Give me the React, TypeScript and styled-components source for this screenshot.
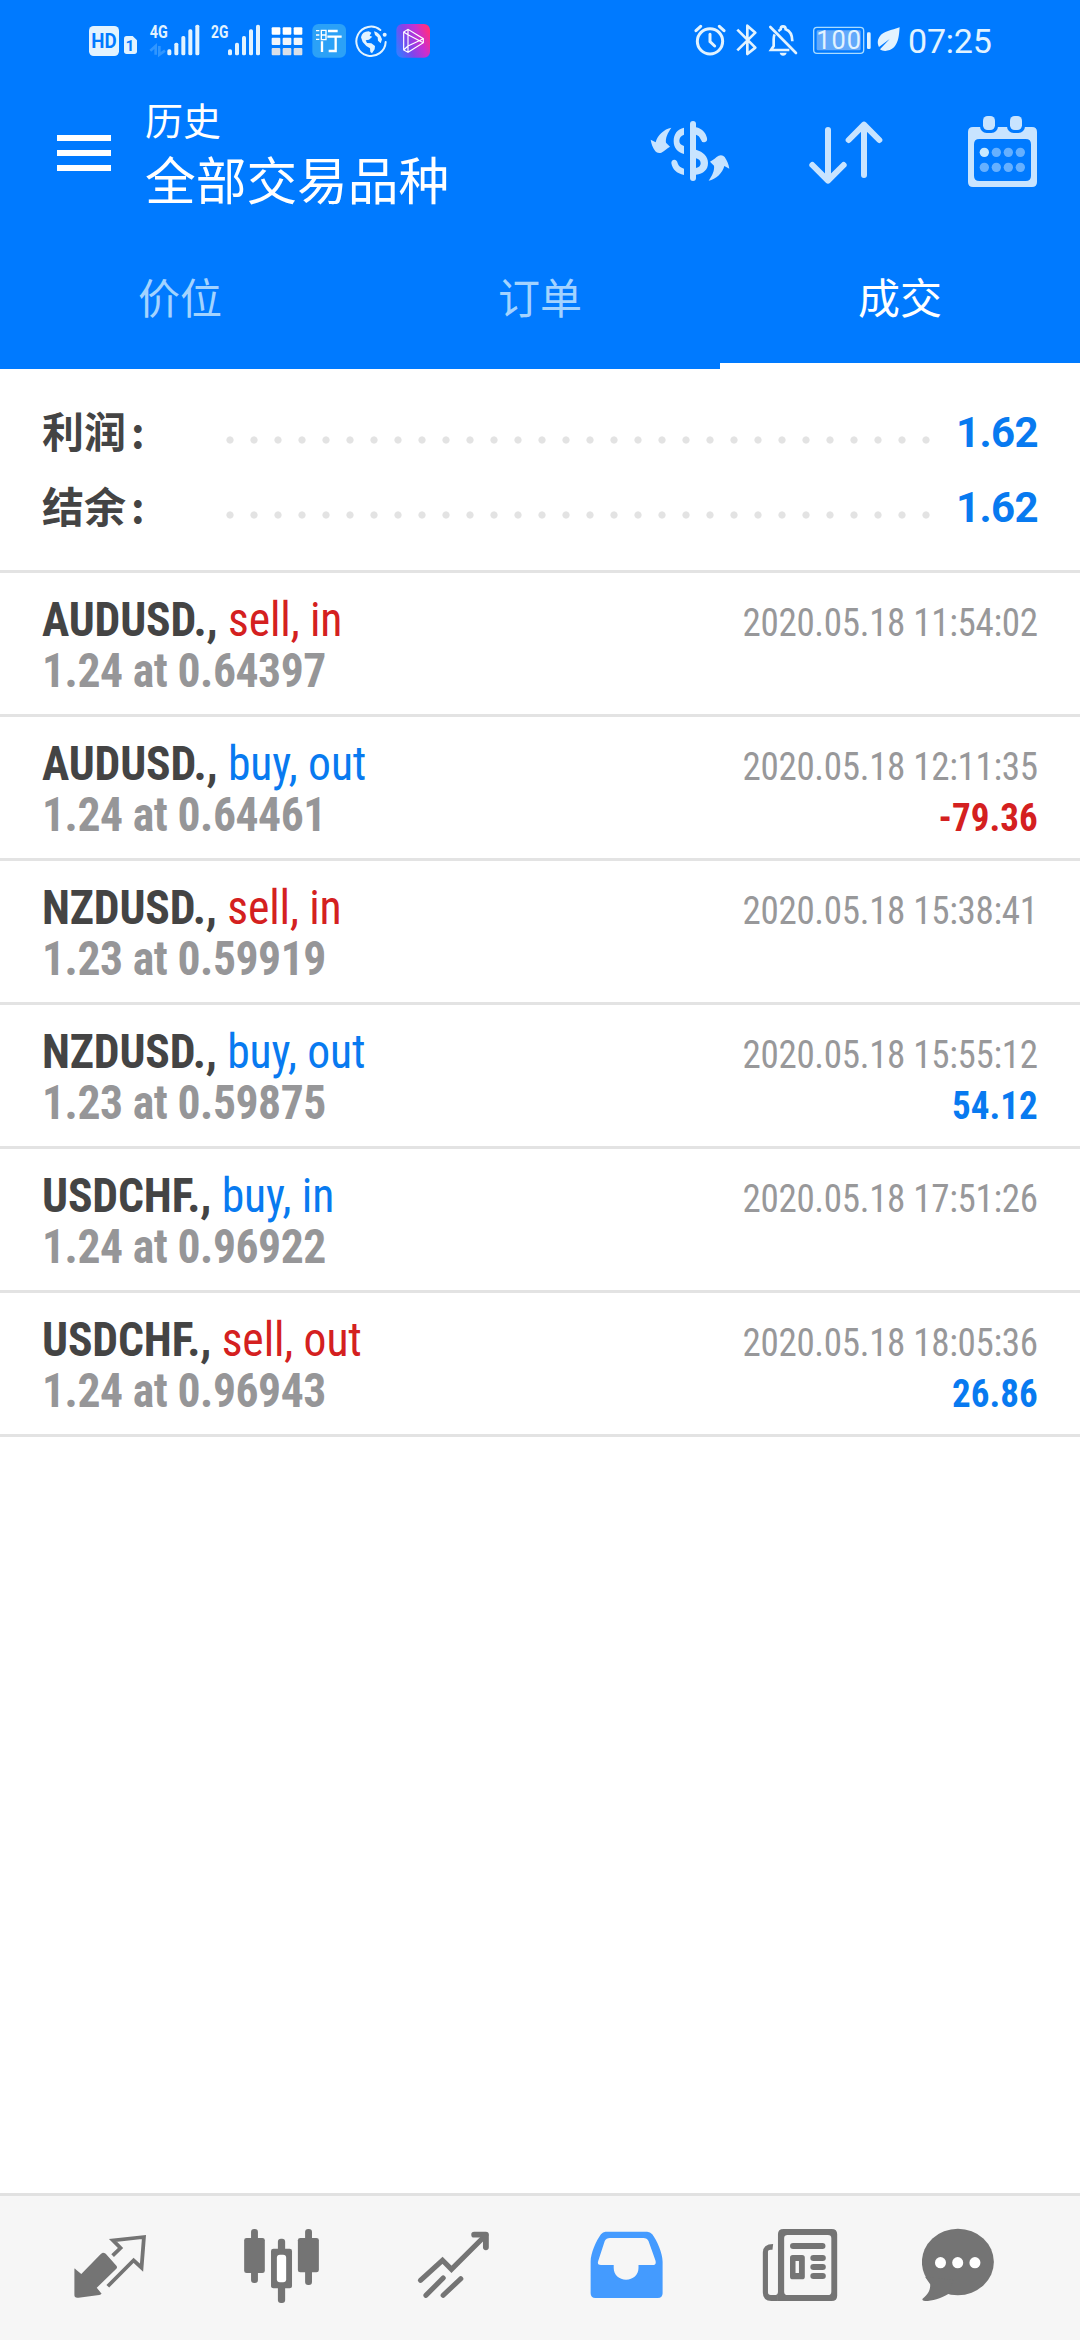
import React from "react";
import styled, { createGlobalStyle } from "styled-components";

const BLUE = "#007aff";
const PALE = "#e2f3ff";

const GlobalStyle = createGlobalStyle`
  * { box-sizing: border-box; }
  body {
    margin: 0;
    background: #fff;
    font-family: Roboto, "Noto Sans CJK SC", sans-serif;
  }
`;

const Screen = styled.div`
  width: 1080px;
  height: 2340px;
  display: flex;
  flex-direction: column;
  background: #fff;
  overflow: hidden;
`;

/* ---------- header ---------- */

const Header = styled.header`
  height: 369px;
  flex: none;
  display: flex;
  flex-direction: column;
  background: ${BLUE};
  color: #fff;
`;

const StatusBar = styled.div`
  height: 80px;
  display: flex;
  justify-content: space-between;
  padding: 0 88px 0 86px;
`;

const StatusGroup = styled.div`
  display: flex;
  align-items: flex-start;
`;

const StatusSvg = styled.svg<{ $w: number; $gap?: number }>`
  display: block;
  flex: none;
  width: ${(p) => p.$w / 3}px;
  height: 80px;
  margin-left: ${(p) => (p.$gap ?? 0) / 3}px;
`;

const Clock = styled.span`
  margin-left: 7px;
  width: 84px;
  font-size: 34px;
  line-height: 82px;
  letter-spacing: -0.2px;
  color: ${PALE};
  white-space: nowrap;
`;

const Toolbar = styled.div`
  height: 146px;
  display: flex;
  align-items: center;
  padding: 0 38px 0 57px;
`;

const MenuButton = styled.div`
  width: 54px;
  display: flex;
  flex-direction: column;
  gap: 9px;
`;

const MenuBar = styled.span`
  height: 6px;
  background: #fff;
`;

const TitleBlock = styled.div`
  flex: 1;
  margin-left: 34px;
  display: flex;
  flex-direction: column;
  white-space: nowrap;
`;

const Title = styled.span`
  font-size: 38px;
  line-height: 58px;
  margin-bottom: 2px;
`;

const Subtitle = styled.span`
  font-size: 50.7px;
  line-height: 60px;
`;

const Actions = styled.div`
  display: flex;
  gap: 76px;
`;

const ActionSvg = styled.svg`
  display: block;
  width: 80px;
  height: 80px;
`;

const Tabs = styled.nav`
  flex: 1;
  display: grid;
  grid-template-columns: repeat(3, 1fr);
`;

const Tab = styled.div<{ $active?: boolean }>`
  display: flex;
  align-items: center;
  justify-content: center;
  padding-top: 2px;
  border-bottom: 6px solid ${(p) => (p.$active ? "#fff" : "transparent")};
  color: ${(p) => (p.$active ? "#fff" : "#a3d3ff")};
  font-size: 42px;
`;

/* ---------- summary ---------- */

const Summary = styled.section`
  height: 204px;
  flex: none;
  padding: 26px 42px 0;
  border-bottom: 3px solid #e3e3e3;
`;

const SummaryRow = styled.div`
  height: 75px;
  display: flex;
  align-items: center;
`;

const SummaryLabel = styled.span`
  width: 176px;
  margin-bottom: 6px;
  font-family: "Noto Sans CJK SC", sans-serif;
  font-size: 42px;
  font-weight: 700;
  line-height: 69px;
  color: #444;
`;

const Colon = styled.span`
  margin-left: 5px;
`;

const Dots = styled.span`
  flex: none;
  width: 720px;
  height: 8px;
  margin-top: 15px;
  background: radial-gradient(circle at 12px 4px, #e3e3e3 3.2px, transparent 4px) 0 0 / 24px 8px;
`;

const SummaryValue = styled.span`
  flex: 1;
  text-align: right;
  font-size: 42px;
  font-weight: 700;
  line-height: 75px;
  letter-spacing: -0.6px;
  color: #087af0;
`;

/* ---------- deals ---------- */

const DealRow = styled.div`
  height: 144px;
  flex: none;
  display: flex;
  justify-content: space-between;
  padding: 21px 42px 0;
  border-bottom: 3px solid #e3e3e3;
  font-family: "Roboto Condensed", Roboto, sans-serif;
  font-stretch: 75%;
  white-space: nowrap;
`;

const DealColumn = styled.div<{ $end?: boolean }>`
  display: flex;
  flex-direction: column;
  align-items: ${(p) => (p.$end ? "flex-end" : "flex-start")};
  transform: scaleX(0.95);
  transform-origin: ${(p) => (p.$end ? "right" : "left")} center;
`;

const tone = { red: "#d42020", blue: "#087af0" };
type Tone = keyof typeof tone;

const DealTitle = styled.div`
  font-size: 48px;
  line-height: 51px;
  font-weight: 700;
  letter-spacing: -0.15px;
  color: #444;
`;

const Side = styled.span<{ $tone: Tone }>`
  font-weight: 400;
  letter-spacing: -0.1px;
  color: ${(p) => tone[p.$tone]};
`;

const DealPrice = styled.div`
  font-size: 48px;
  line-height: 51px;
  font-weight: 700;
  letter-spacing: -0.45px;
  color: #969698;
`;

const DealTime = styled.div`
  font-size: 39px;
  line-height: 51px;
  padding-top: 4px;
  height: 55px;
  letter-spacing: -0.35px;
  color: #98989a;
`;

const DealProfit = styled.div<{ $tone: Tone }>`
  font-size: 39px;
  line-height: 51px;
  font-weight: 700;
  color: ${(p) => tone[p.$tone]};
`;

/* ---------- bottom navigation ---------- */

const Empty = styled.main`
  flex: 1;
`;

const BottomNav = styled.nav`
  height: 147px;
  flex: none;
  display: grid;
  grid-template-columns: repeat(6, 1fr);
  place-items: center;
  padding: 0 24px;
  background: #f6f6f6;
  border-top: 3px solid #e1e1e1;
`;

const NavSvg = styled.svg`
  display: block;
  width: 96px;
  height: 96px;
`;

function SignalBars({ x }: { x: number }) {
  const tops = [148, 128, 108, 88, 74];
  return (
    <>
      {tops.map((top, i) => (
        <rect key={top} x={x + i * 21} y={top} width={12} height={166 - top} rx={5} fill={PALE} />
      ))}
    </>
  );
}

function StatusLeft() {
  return (
    <StatusGroup>
      <StatusSvg $w={156} viewBox="78 0 156 240">
        <rect x={87} y={78} width={90} height={90} rx={14} fill={PALE} />
        <text x={94} y={145} fontFamily="Roboto" fontWeight={700} fontSize={62} textLength={76} lengthAdjust="spacingAndGlyphs" fill={BLUE}>HD</text>
        <path d="M192 116 Q192 108 200 108 H218 L231 121 V154 Q231 162 223 162 H200 Q192 162 192 154Z" fill={PALE} />
        <text x={210} y={152} textAnchor="middle" fontFamily="Roboto" fontWeight={700} fontSize={46} fill={BLUE}>1</text>
      </StatusSvg>
      <StatusSvg $w={156} $gap={32} viewBox="266 0 156 240">
        <text x={268} y={115} fontFamily="Roboto" fontWeight={700} fontSize={54} textLength={54} lengthAdjust="spacingAndGlyphs" fill={PALE}>4G</text>
        <path d="M270 152 L286 138 V164 M297 138 V164 L314 152" fill="none" stroke="#3096ff" strokeWidth={8} />
        <SignalBars x={321} />
      </StatusSvg>
      <StatusSvg $w={156} $gap={28} viewBox="450 0 156 240">
        <text x={453} y={115} fontFamily="Roboto" fontWeight={700} fontSize={54} textLength={52} lengthAdjust="spacingAndGlyphs" fill={PALE}>2G</text>
        <SignalBars x={504} />
      </StatusSvg>
      <StatusSvg $w={96} $gap={27} viewBox="633 0 96 240">
        {[82, 113, 144].map((y, r) =>
          [635, 668, 701].map((x) => (
            <rect key={`${x}-${y}`} x={x} y={y} width={26} height={22} rx={3} fill={["#fff", "#f1f5fa", "#d9dfe8"][r]} />
          ))
        )}
      </StatusSvg>
      <StatusSvg $w={102} $gap={27} viewBox="756 0 102 240">
        <rect x={757} y={72} width={101} height={101} rx={18} fill="#2ba1f7" />
        <path d="M768 92 H778 M768 105 H778 M768 118 H778 M784 91 H798 V119 H784 Z M784 105 H798" fill="none" stroke="#fff" strokeWidth={4} />
        <path d="M804 93 H833 M802 110 H845 M827 110 V153 H806 M786 124 V156" fill="none" stroke="#fff" strokeWidth={7} />
      </StatusSvg>
      <StatusSvg $w={102} $gap={27} viewBox="885 0 102 240">
        <path d="M961 90 A44 44 0 1 0 977 126" fill="none" stroke={PALE} strokeWidth={6} strokeLinecap="round" />
        <circle cx={974} cy={104} r={6} fill={PALE} />
        <path d="M903 112 Q906 94 926 94 L934 98 L929 107 L937 110 L927 119 L917 121 L921 129 L934 130 L945 138 L944 148 L936 160 L931 156 L930 145 L919 138 L908 126 Z" fill={PALE} />
        <path d="M942 94 Q960 98 966 118 L962 130 L954 122 L953 112 L945 105 Z" fill={PALE} />
      </StatusSvg>
      <StatusSvg $w={102} $gap={21} viewBox="1008 0 102 240">
        <defs>
          <linearGradient id="playTile" x1="0" y1="0.7" x2="1" y2="0.3">
            <stop offset="0" stopColor="#3a78ff" />
            <stop offset="0.35" stopColor="#7f45ec" />
            <stop offset="0.7" stopColor="#c92fd0" />
            <stop offset="1" stopColor="#ff2f7e" />
          </linearGradient>
        </defs>
        <rect x={1009} y={72} width={101} height={101} rx={18} fill="url(#playTile)" />
        <path d="M1031 96 L1044 88 L1090 116 V128 L1044 157 L1031 150 Z M1044 88 V157 M1031 96 L1044 104 M1044 138 L1090 116 M1044 104 L1090 128 M1031 150 L1044 138" fill="none" stroke="#fff" strokeWidth={3.5} />
      </StatusSvg>
    </StatusGroup>
  );
}

function StatusRight() {
  return (
    <StatusGroup>
      <StatusSvg $w={96} viewBox="102 0 96 240">
        <circle cx={150} cy={124} r={38} fill="none" stroke={PALE} strokeWidth={9} />
        <path d="M150 103 V125 L164 138" fill="none" stroke={PALE} strokeWidth={9} strokeLinecap="round" />
        <path d="M108 92 L122 79 M192 92 L178 79" stroke={PALE} strokeWidth={9} strokeLinecap="round" />
      </StatusSvg>
      <StatusSvg $w={66} $gap={30} viewBox="228 0 66 240">
        <path d="M232 89 L286 143 L262 162 V77 L286 98 L232 151" fill="none" stroke={PALE} strokeWidth={8} strokeLinejoin="round" />
      </StatusSvg>
      <StatusSvg $w={90} $gap={30} viewBox="324 0 90 240">
        <path d="M331 81 L408 159" stroke={PALE} strokeWidth={8} strokeLinecap="round" />
        <path d="M344 103 Q341 108 341 118 V138 L333 150 H388 M355 93 Q360 90 362 88 Q362 79 369 79 Q377 79 377 88 Q397 95 397 124" fill="none" stroke={PALE} strokeWidth={8} />
        <path d="M359 158 H380 Q378 167 369 167 Q361 167 359 158Z" fill={PALE} />
      </StatusSvg>
      <StatusSvg $w={180} $gap={42} viewBox="456 0 180 240">
        <rect x={461} y={82} width={150} height={78} rx={10} fill="none" stroke="#a9dcff" strokeWidth={4} />
        <rect x={470} y={91} width={132} height={60} rx={4} fill="#62a9fb" />
        <rect x={621} y={97} width={11} height={50} rx={4} fill={PALE} />
        <text x={536} y={148} textAnchor="middle" fontFamily="Roboto" fontSize={76} textLength={134} lengthAdjust="spacing" fill={PALE}>100</text>
      </StatusSvg>
      <StatusSvg $w={72} $gap={15} viewBox="651 0 72 240">
        <path d="M719 82 C695 92 670 92 658 111 C651 123 653 133 657 141 L689 117 L660 148 C670 156 690 154 702 142 C716 127 717 105 719 82Z" fill={PALE} />
      </StatusSvg>
      <Clock>07:25</Clock>
    </StatusGroup>
  );
}

const ICON = "#c8e4ff";

function CurrencyIcon() {
  const arrow = "M214 113 C203 129 196 144 198 158 L210 170 C200 175 192 184 184 188 Q172 191 166 184 C158 172 154 162 152 149 L167 157 C172 136 192 117 214 113Z";
  return (
    <ActionSvg viewBox="150 69 240 240" fill={ICON}>
      <path d={arrow} />
      <path d={arrow} transform="rotate(180 270 192.5)" />
      <rect x={270} y={93} width={18} height={180} rx={9} />
      <path d="M252 113 C232 117 221 132 221 153 C221 174 233 187 252 192 V168 C242 164 238 160 238 152 C238 143 243 137 252 134 Z" />
      <path d="M288 112 C306 116 317 127 321 144 Q323 155 313 157 Q305 158 302 148 C299 140 295 136 288 134 Z" />
      <path d="M288 179 C310 186 324 198 324 219 C324 240 310 251 288 254 V234 C298 232 302 227 302 220 C302 212 297 208 288 205Z" />
      <path d="M252 255 C230 250 217 238 214 219 Q214 210 223 209 Q231 209 233 220 C236 229 242 233 252 236Z" />
    </ActionSvg>
  );
}

function SortIcon() {
  return (
    <ActionSvg viewBox="618 69 240 240" fill="none" stroke={ICON} strokeWidth={18} strokeLinecap="round" strokeLinejoin="round">
      <path d="M684 120 V270 M637 225 L684 272 L731 225" />
      <path d="M792 255 V104 M746 150 L792 104 L838 150" />
    </ActionSvg>
  );
}

function CalendarIcon() {
  return (
    <ActionSvg viewBox="1086 69 240 240">
      <path fillRule="evenodd" fill={ICON} d="M1119 111 H1296 Q1311 111 1311 126 V276 Q1311 291 1296 291 H1119 Q1104 291 1104 276 V126 Q1104 111 1119 111Z M1138 147 Q1122 147 1122 163 V257 Q1122 273 1138 273 H1277 Q1293 273 1293 257 V163 Q1293 147 1277 147Z" />
      {[1149, 1230].map((x) => (
        <React.Fragment key={x}>
          <rect x={x - 9} y={69} width={54} height={60} rx={20} fill={BLUE} />
          <rect x={x} y={78} width={36} height={42} rx={14} fill={ICON} />
        </React.Fragment>
      ))}
      {[187, 232].map((y) =>
        [1153, 1189, 1225, 1261].map((x) => (
          <circle key={`${x}-${y}`} cx={x} cy={y} r={14} fill={x === 1153 && y === 187 ? "#c8e9ff" : "#66b0ff"} />
        ))
      )}
    </ActionSvg>
  );
}

const GRAY = "#747474";
const navBox = (center: number) => `${center - 139.4} 120 278.8 288`;

function NavIcon({ center, children }: { center: number; children: React.ReactNode }) {
  return (
    <NavSvg viewBox={navBox(center)} preserveAspectRatio="none">
      {children}
    </NavSvg>
  );
}

function Navigation() {
  return (
    <BottomNav>
      <NavIcon center={319.4}>
        <path fill={GRAY} d="M299 218 Q303 218 307 221 L338 257 Q342 262 337 267 L281 323 L295 341 Q293 344 288 345 L228 353 Q216 355 216 345 V266 Q217 265 221 269 L236 282 L292 223 Q296 218 299 218Z" />
        <path fill="none" stroke={GRAY} strokeWidth={11} d="M327 227 L350 204 L328 181 L418 171 L411 263 L388 241 L313 319" />
      </NavIcon>
      <NavIcon center={818.9}>
        <g fill={GRAY}>
          <rect x={729} y={147} width={20} height={162} rx={9} />
          <rect x={709} y={174} width={60} height={105} rx={7} />
          <rect x={807} y={176} width={21} height={193} rx={9} />
          <rect x={787} y={206} width={61} height={119} rx={7} />
          <rect x={886} y={147} width={20} height={168} rx={9} />
          <rect x={865} y={174} width={61} height={103} rx={7} />
        </g>
        <rect x={804} y={224} width={27} height={83} rx={9} fill="#fff" />
      </NavIcon>
      <NavIcon center={1318.4}>
        <g fill="none" stroke={GRAY} strokeWidth={15} strokeLinecap="round">
          <path d="M1221 301 L1285 241 L1311 268 L1411 165" />
          <path d="M1237 346 L1287 294 M1287 346 L1338 296" />
          <path strokeWidth={17} strokeLinejoin="round" d="M1377 164 H1411 V202" />
        </g>
      </NavIcon>
      <NavIcon center={249.7}>
        <path fill="#449bff" fillRule="evenodd" d="M190 155 H311 Q320 155 326 163 C340 182 356 220 356 245 V340 Q356 354 342 354 H161 Q147 354 147 340 V245 C147 220 163 182 177 163 Q183 155 190 155Z M203 174 Q192 174 188 183 L169 243 Q165 255 177 255 H214 V264 C214 285 230 299 250 299 C270 299 286 285 286 264 V255 H327 Q339 255 335 241 L315 183 Q311 174 300 174Z" />
      </NavIcon>
      <NavIcon center={749.2}>
        <path fill={GRAY} fillRule="evenodd" d="M707 147 H847 Q863 147 863 163 V347 Q863 363 847 363 H691 V163 Q691 147 707 147Z M719 165 Q709 165 709 175 V335 Q709 345 719 345 H836 Q846 345 846 335 V175 Q846 165 836 165Z" />
        <path fill={GRAY} d="M677 192 L675 209 H670 Q662 209 662 215 V337 Q662 345 670 345 H681 Q691 345 691 335 V363 H672 Q647 363 647 337 V218 Q647 192 677 192Z" />
        <g fill={GRAY}>
          <rect x={726} y={189} width={103} height={18} rx={9} />
          <rect x={785} y={225} width={45} height={18} rx={9} />
          <rect x={785} y={252} width={45} height={18} rx={9} />
          <rect x={785} y={279} width={45} height={18} rx={9} />
          <path fillRule="evenodd" d="M734 225 H761 Q769 225 769 233 V290 Q769 298 761 298 H734 Q726 298 726 290 V233 Q726 225 734 225Z M742 243 V279 H752 V243Z" />
        </g>
      </NavIcon>
      <NavIcon center={1248.7}>
        <g fill={GRAY}>
          <ellipse cx={1213.5} cy={246} rx={104.5} ry={99.5} />
          <path d="M1118 290 L1133 313 C1134 330 1127 344 1111 356 Q1108 363 1118 363 C1140 362 1162 356 1187 341 L1200 300Z" />
        </g>
        {[1163, 1213, 1263].map((x) => (
          <ellipse key={x} cx={x} cy={248} rx={16} ry={17} fill="#fff" />
        ))}
      </NavIcon>
    </BottomNav>
  );
}

interface Deal {
  symbol: string;
  side: string;
  tone: Tone;
  price: string;
  time: string;
  profit?: string;
}

const deals: Deal[] = [
  { symbol: "AUDUSD.", side: "sell, in", tone: "red", price: "1.24 at 0.64397", time: "2020.05.18 11:54:02" },
  { symbol: "AUDUSD.", side: "buy, out", tone: "blue", price: "1.24 at 0.64461", time: "2020.05.18 12:11:35", profit: "-79.36" },
  { symbol: "NZDUSD.", side: "sell, in", tone: "red", price: "1.23 at 0.59919", time: "2020.05.18 15:38:41" },
  { symbol: "NZDUSD.", side: "buy, out", tone: "blue", price: "1.23 at 0.59875", time: "2020.05.18 15:55:12", profit: "54.12" },
  { symbol: "USDCHF.", side: "buy, in", tone: "blue", price: "1.24 at 0.96922", time: "2020.05.18 17:51:26" },
  { symbol: "USDCHF.", side: "sell, out", tone: "red", price: "1.24 at 0.96943", time: "2020.05.18 18:05:36", profit: "26.86" },
];

const totals = [
  { label: "利润", value: "1.62" },
  { label: "结余", value: "1.62" },
];

export default function App() {
  return (
    <Screen>
      <GlobalStyle />
      <Header>
        <StatusBar>
          <StatusLeft />
          <StatusRight />
        </StatusBar>
        <Toolbar>
          <MenuButton>
            <MenuBar />
            <MenuBar />
            <MenuBar />
          </MenuButton>
          <TitleBlock>
            <Title>历史</Title>
            <Subtitle>全部交易品种</Subtitle>
          </TitleBlock>
          <Actions>
            <CurrencyIcon />
            <SortIcon />
            <CalendarIcon />
          </Actions>
        </Toolbar>
        <Tabs>
          <Tab>价位</Tab>
          <Tab>订单</Tab>
          <Tab $active>成交</Tab>
        </Tabs>
      </Header>
      <Summary>
        {totals.map((t) => (
          <SummaryRow key={t.label}>
            <SummaryLabel>
              {t.label}
              <Colon>:</Colon>
            </SummaryLabel>
            <Dots />
            <SummaryValue>{t.value}</SummaryValue>
          </SummaryRow>
        ))}
      </Summary>
      {deals.map((d) => (
        <DealRow key={d.time}>
          <DealColumn>
            <DealTitle>
              {d.symbol}, <Side $tone={d.tone}>{d.side}</Side>
            </DealTitle>
            <DealPrice>{d.price}</DealPrice>
          </DealColumn>
          <DealColumn $end>
            <DealTime>{d.time}</DealTime>
            {d.profit && <DealProfit $tone={d.profit.startsWith("-") ? "red" : "blue"}>{d.profit}</DealProfit>}
          </DealColumn>
        </DealRow>
      ))}
      <Empty />
      <Navigation />
    </Screen>
  );
}
